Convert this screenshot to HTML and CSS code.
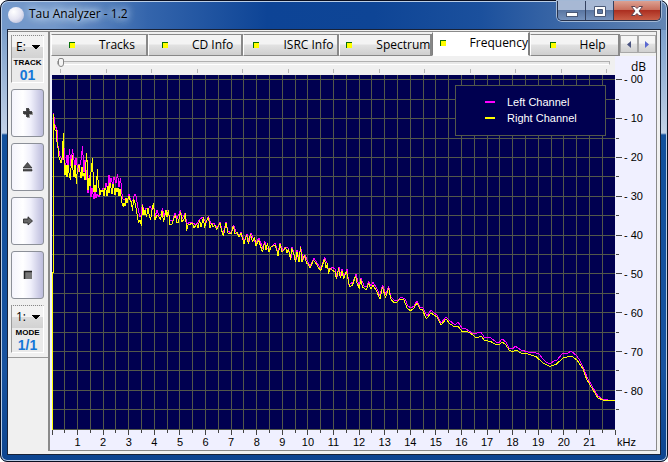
FILE: index.html
```html
<!DOCTYPE html>
<html lang="en">
<head>
<meta charset="utf-8">
<title>Tau Analyzer - 1.2</title>
<link rel="stylesheet" href="styles.css">
</head>
<body>
<div class="window">
  <header class="titlebar">
    <span class="orb"></span>
    <h1 class="title">Tau Analyzer - 1.2</h1>
    <div class="controls">
      <button class="ctl" aria-label="Minimize"><svg width="12" height="12"><rect x=".5" y="7.5" width="11" height="4" fill="#fff" stroke="#4b5a78"/></svg></button>
      <button class="ctl" aria-label="Maximize"><svg width="12" height="12"><path fill="#fff" stroke="#4b5a78" fill-rule="evenodd" d="M.5 1.500h11v10h-11zM3.500 4.500h5v4h-5z"/></svg></button>
      <button class="ctl close" aria-label="Close"><svg width="14" height="12"><path fill="#fff" stroke="#5d4350" d="M1.500 1.500h3.500l2 2 2-2h3.500L9 6l3.500 4.500H9l-2-2-2 2H1.500L5 6z"/></svg></button>
    </div>
  </header>
  <main class="client">
    <aside class="sidebar">
      <div class="tools">
        <div class="frame">
          <select class="combo" aria-label="Drive"><option>E:</option></select>
          <span class="caption">TRACK</span>
          <span class="value">01</span>
        </div>
        <button class="tool" aria-label="Add"><svg width="10" height="10"><path fill="#999" d="M4 1h3v3h3v3H7v3H4V7H1V4h3z"/><path fill="#222" d="M3 0h3v3h3v3H6v3H3V6H0V3h3z" opacity=".8"/></svg></button>
        <button class="tool" aria-label="Eject"><svg width="10" height="10"><path fill="#555" stroke="#222" stroke-width=".6" d="M4.500.5L9 6H0zM0 7.500h9v1.500H0z"/></svg></button>
        <button class="tool" aria-label="Next"><svg width="10" height="10"><path fill="#666" stroke="#222" stroke-width=".8" d="M.5 3H5V.800L9.500 5 5 9V7H.5z"/></svg></button>
        <button class="tool" aria-label="Stop"><svg width="10" height="10"><rect x="1" y="1" width="8" height="8" fill="#777"/><path stroke="#222" stroke-width="1.500" fill="none" d="M1.500 9V1.500H9"/></svg></button>
        <div class="frame">
          <select class="combo" aria-label="Mode"><option>1:</option></select>
          <span class="caption">MODE</span>
          <span class="value">1/1</span>
        </div>
      </div>
    </aside>
    <section class="panel">
      <nav class="tabs">
        <div class="tablist" role="tablist">
          <button class="tab" role="tab"><i class="led"></i>Tracks</button>
          <button class="tab" role="tab"><i class="led"></i>CD Info</button>
          <button class="tab" role="tab"><i class="led"></i>ISRC Info</button>
          <button class="tab" role="tab"><i class="led"></i>Spectrum</button>
          <button class="tab active" role="tab" aria-selected="true"><i class="led"></i>Frequency</button>
          <button class="tab" role="tab"><i class="led"></i>Help</button>
        </div>
        <button class="arrow" aria-label="Scroll left"><svg width="4" height="7"><path fill="#4a5480" d="M4 0v7L0 3.500z"/></svg></button>
        <button class="arrow" aria-label="Scroll right"><svg width="4" height="7"><path fill="#5a68d0" d="M0 0v7l4-3.500z"/></svg></button>
      </nav>
      <div class="page">
        <div class="sliderbar">
          <input class="slider" type="range" min="0" max="12" value="0" aria-label="Position">
          <svg class="marks" viewBox="52 0 563 4" preserveAspectRatio="none" shape-rendering="crispEdges"><path stroke="#b4b4b4" d="M60.500 0v4M106.500 0v4M151.500 0v4M197.500 0v4M242.500 0v4M288.500 0v4M333.500 0v4M379.500 0v4M424.500 0v4M470.500 0v4M515.500 0v4M561.500 0v4M606.500 0v4"/></svg>
        </div>
        <div class="unit-y">dB</div>
        <div class="plot">
          <svg class="graph" viewBox="52 75 563 355" preserveAspectRatio="none" role="img" aria-label="Frequency response">
            <rect x="52" y="75" width="563" height="355" fill="#000050"/>
            <g fill="none" shape-rendering="crispEdges">
              <path stroke="#53584a" d="M64.500 75v355M77.500 75v355M90.500 75v355M103.500 75v355M115.500 75v355M128.500 75v355M141.500 75v355M154.500 75v355M167.500 75v355M179.500 75v355M192.500 75v355M205.500 75v355M218.500 75v355M231.500 75v355M243.500 75v355M256.500 75v355M269.500 75v355M282.500 75v355M295.500 75v355M307.500 75v355M320.500 75v355M333.500 75v355M346.500 75v355M359.500 75v355M371.500 75v355M384.500 75v355M397.500 75v355M410.500 75v355M423.500 75v355M435.500 75v355M448.500 75v355M461.500 75v355M474.500 75v355M487.500 75v355M499.500 75v355M512.500 75v355M525.500 75v355M538.500 75v355M551.500 75v355M563.500 75v355M576.500 75v355M589.500 75v355M602.500 75v355
              M52 79.500h563M52 99.500h563M52 118.500h563M52 138.500h563M52 157.500h563M52 176.500h563M52 196.500h563M52 215.500h563M52 235.500h563M52 254.500h563M52 273.500h563M52 293.500h563M52 312.500h563M52 332.500h563M52 351.500h563M52 370.500h563M52 390.500h563M52 409.500h563M52 429.500h563"/>
              <path stroke="#444" d="M616 79.500h6M616 118.500h6M616 157.500h6M616 196.500h6M616 235.500h6M616 273.500h6M616 312.500h6M616 351.500h6M616 390.500h6M616 99.500h3M616 138.500h3M616 176.500h3M616 215.500h3M616 254.500h3M616 293.500h3M616 332.500h3M616 370.500h3M616 409.500h3
              M52.500 430v5M77.500 430v5M103.500 430v5M128.500 430v5M154.500 430v5M179.500 430v5M205.500 430v5M231.500 430v5M256.500 430v5M282.500 430v5M307.500 430v5M333.500 430v5M359.500 430v5M384.500 430v5M410.500 430v5M435.500 430v5M461.500 430v5M487.500 430v5M512.500 430v5M538.500 430v5M563.500 430v5M589.500 430v5M615.500 430v5
              M64.500 430v3M90.500 430v3M115.500 430v3M141.500 430v3M167.500 430v3M192.500 430v3M218.500 430v3M243.500 430v3M269.500 430v3M295.500 430v3M320.500 430v3M346.500 430v3M371.500 430v3M397.500 430v3M423.500 430v3M448.500 430v3M474.500 430v3M499.500 430v3M525.500 430v3M551.500 430v3M576.500 430v3M602.500 430v3"/>
            </g>
            <path class="trace left" d="M53.500 140V113L55 125 57 130 58 146 60 156 62 160 63.500 135 65 172 67 155 68 168 69.500 149 71 166 72.500 149 74 160 75 168 76 158 78 172 79 164 80.500 165 82.500 146 84 172 85 160 87 180 88 193 90 175 91 197 92 188 94 199 95 192 96 198 97 194 99 197 101 192 103 188 105 189 106 183 108 190 109 175 110 184 111 178 113 186 114 177 116 183 117.500 174 119 187 120.500 178 122 194 123 199 125 199 127 202 129 194 131 202 133 200 134.500 194 136 196 138 208 140 217 141 215 142.500 204 144 212 146 208 148 210 150 206 152 210 153.500 203 155 217 157 210 159 216 161 214 162.500 208 164 217 166 210 168 210 170 221 173 220 175 213 177 219 180.500 210 182 219 185 213 187 224 190 222 193 223 196 225 200 219 203 217 206 223 208.500 216 211 224 214 223 217 228 220 222 223 235 226 222 228 231 231 233 233.500 225 236 232 239 236 241 232 244 241 247 234 249 242 251 233 254 240 256 243 259 238 263 249 264.500 241 267 248 269 250 272 246 275 243 278 253 280 243 283 251 285 247 288 248 291 258 292 247 296 260 297 250 299 260 300.500 246 303 260 305 255 308 262 310 266 314 258 317 263 321 269 324.500 257 327 263 329 272 332 267 335 269 337 277 339 267 341 276 342 269 344 277 347 269 349 285 353 282 356 274 359 286 361 278 364 286 367 287 368.500 281 371 286 373 282 377 289 380 296 382.500 285 386 295 388.500 286 391 297 394 300 398 300 401 297 405 299 408 306 411 308 414 306 417 301 420 307 423 308 427 316 431 310 434 313 437 315 441 323 446 317 449 320 455 325 458 322 462 328 466 329 472 333 477 333 481 332 484 337 491 338 496 342 499 343 502 339 506 342 509 348 513 349 515 346 521 350 528 352 536 353 539 354 543 359 546 362 550 364 554 361 557 360 563 353 567 354 571 351 577 356 580 361 583 367 587 377 593 388 598 396 602 399 608 400 615 400.500"/>
            <path class="trace right" d="M52.500 430V272L53.500 272V114L54 124 55 130 56.500 131 57 142 58 148 59 157 60 160 61 163 62 158 63.500 133 64 160 65 175 66 165 67 177 68 165 69 173 70.500 180 71 168 72.500 155 73 170 74 177 75 165 76.500 184 77 174 78 168 79 165 80 172 81 178 82 167 83 176 84 173 85 180 86.500 153 87 160 88 190 89 178 90 186 91 172 92.500 158 93 172 94 192 95 185 96 192 97.500 169 98 180 99 188 100 195 101 190 102 192 103 190 104 196 105 188 106 190 107 196 108 186 109 193 110 183 111 188 112 194 113 184 114 188 115 195 116 188 117 192 118 188 119 196 120 189 121 196 122 203 123.500 207 124 203 125 206 126 198 127 203 128 199 129 196 130 200 131.500 202 132.500 211 133.500 199 135 203 136 208 137 214 138.500 223 140 220 141.500 226 142.500 205 144 215 145 210 146.500 217 148 208 149 214 150.500 220 152 210 153.500 203 155 220 157 215 159 217 160.500 220 162 211 163.500 222 166 210 167 217 168.500 210 170 225 172 224 174 218 175.500 215 177 223 178.500 222 180.500 212 182 222 184 219 185.500 213 186.500 231 188 225 190.500 224 192.500 223 194 228 196.500 224 198 228 199.500 220 201 227 203.500 217 204.500 228 206 222 208.500 217 210 228 211.500 223 213 227 215 225 216.500 230 220 223 221.500 230 223.500 236 226 223 228 233 231 234 233.500 226 235 234 237 232 239 237 241 233 244 244 246.500 235 248.500 244 250.500 234 252.500 242 254.500 237 256 246 258.500 240 260.500 246 262.500 252 264.500 243 266 250 267.500 243 269 252 271 247 275 245 276.500 249 278 256 280 244 282 252 284 250 285.500 247 287 253 288.500 249 290.500 260 291.500 248 293.500 253 295.500 262 297 252 299 262 300.500 247 302 262 304.500 255 306.500 263 308 264 310 268 313.500 260 317 265 320.500 271 324.500 259 326 268 327.500 263 328.500 274 330 268 332 270 335 272 336.500 279 338.500 268 340.500 278 342 271 343.500 279 346.500 271 349.500 287 352.500 285 355.500 276 357 283 359.500 289 360.500 279 362.500 287 366.500 290 368.500 283 371 289 373 285 376.500 291 380 299 382.500 287 385.500 298 388.500 288 391 299 394 303 397 302 400.500 299 404 300 407 308 410.500 311 414 308 417 303 420 309 422.500 310 426.500 319 431 313 437 317 441 325 446 319 450 324 455 327 458 326 461.500 331 466 331 471.500 334 476.500 338 481.500 336 484 340 491.500 342 496.500 345 500 344 502.500 342 506 345 509 350 512.500 351.500 516 350 521 353 528 354 536.500 357 543 363 550 366.500 556.500 364 563 358 571.500 356 577 360 583 369 586.500 379 593 390 598 398 603 400 615 401"/>
          </svg>
          <div class="legend">
            <div class="key"><i class="swatch left"></i>Left Channel</div>
            <div class="key"><i class="swatch right"></i>Right Channel</div>
          </div>
        </div>
        <div class="axis-y">
          <span>- 00</span><span>- 10</span><span>- 20</span><span>- 30</span><span>- 40</span><span>- 50</span><span>- 60</span><span>- 70</span><span>- 80</span>
        </div>
        <div class="axis-x">
          <span>1</span><span>2</span><span>3</span><span>4</span><span>5</span><span>6</span><span>7</span><span>8</span><span>9</span><span>10</span><span>11</span><span>12</span><span>13</span><span>14</span><span>15</span><span>16</span><span>17</span><span>18</span><span>19</span><span>20</span><span>21</span>
        </div>
        <div class="unit-x">kHz</div>
      </div>
    </section>
  </main>
</div>
</body>
</html>
```
FILE: styles.css
```css
* { box-sizing: border-box; }

body {
  margin: 0;
  background: #fff;
  font: 12px/14px "Open Sans", sans-serif;
  color: #000;
}

button, select { font: inherit; color: inherit; padding: 0; margin: 0; }

.window {
  display: flex;
  flex-direction: column;
  min-height: 100vh;
  padding: 0 6px 6px;
  border: 1px solid #0a0f20;
  border-radius: 8px 8px 7px 7px;
  background:
    linear-gradient(90deg, #7398ca 0, #7398ca 8%, #3465ac 22%, #0d4496 40%, #0e4596 56%, #1b509d 72%, #4a72ab 90%, #6486b4 100%) top / 100% 29px no-repeat,
    linear-gradient(#7c9fcb 29px, #c3d2e7 132px, #12509c 134px, #1853a0 80%, #0d4590);
  box-shadow: inset 0 0 0 1px #b9cde6;
}

/* Title bar */
.titlebar { display: flex; align-items: flex-start; height: 28px; }
.orb {
  width: 16px; height: 16px; margin: 6px 5px 0 1px;
  border-radius: 50%;
  background: radial-gradient(circle at 35% 30%, #fff, #e4e4f2 50%, #aab2d2);
}
.title {
  margin: 6px 0 0; padding: 0 8px 0 0;
  font-size: 12px; font-weight: 400; line-height: 14px;
  text-shadow: 0 0 6px #cfe0f4, 0 0 8px #cfe0f4, 0 0 10px #cfe0f4;
}
.controls {
  display: flex; margin-left: auto;
  height: 20px;
  border: 1px solid #26324e; border-top: 0;
  border-radius: 0 0 5px 5px;
  box-shadow: 0 0 0 1px #a3b8d5;
  overflow: hidden;
}
.ctl {
  display: flex; align-items: center; justify-content: center;
  width: 28px; border: 0; border-right: 1px solid #34415f;
  background: linear-gradient(#a7b8d4 45%, #5a76a2 50%, #7793bd);
}
.ctl.close {
  width: 46px; border-right: 0;
  background: linear-gradient(#dca192 0, #c9705e 45%, #ac2f21 50%, #c95f48);
}

/* Client area */
.client {
  flex: 1; display: flex;
  border: 1px solid #182238;
  background: #f0f0f0;
}
.sidebar { width: 40px; padding: 1px 0; }
.tools {
  display: flex; flex-direction: column; gap: 6px;
  padding: 3px 3px 4px;
  border-top: 1px solid #8c8c8c;
  border-bottom: 1px solid #9a9a9a;
}
.frame {
  display: flex; flex-direction: column; align-items: center;
  height: 48px; width: 33px;
  border-left: 1px solid #9a9a9a;
  border-right: 1px solid #fff;
  border-top: 1px dotted #888;
  border-bottom: 1px solid #fff;
  background: #eaeaea;
}
.combo {
  appearance: none; width: 100%; height: 22px;
  padding: 0 0 0 4px;
  border: 0; border-radius: 0;
  background:
    linear-gradient(to bottom right, #000 50%, transparent 51%) 24px 9px / 4px 4px no-repeat,
    linear-gradient(to bottom left, #000 50%, transparent 51%) 20px 9px / 4px 4px no-repeat,
    linear-gradient(#f3f3f3 50%, #dcdcdc 50%, #d2d2d2);
}
.caption { font: 700 8px/10px "Liberation Sans", sans-serif; }
.value { font: 700 14px/14px "Liberation Sans", sans-serif; color: #1477d8; }
.tool {
  display: flex; align-items: center; justify-content: center;
  height: 48px; width: 33px;
  border: 1px solid #8c9098; border-radius: 3px;
  background: linear-gradient(90deg, #f4f4fc, #fff 35%, #f0f0fb 60%, #bcbcdc);
}

/* Tabs */
.panel {
  flex: 1; min-width: 0;
  display: flex; flex-direction: column;
  margin: 1px 3px 3px 0;
  border: 1px solid #8a8a8a; border-left: 2px solid #8a8a8a;
}
.tabs { display: flex; align-items: flex-end; height: 24px; padding-left: 1px; }
.tablist {
  flex: 1; align-self: stretch;
  display: grid; align-items: end;
  grid-template-columns: 97fr 95fr 97fr 93fr 98fr 90fr;
}
.tab {
  display: flex; align-items: center; justify-content: center; gap: 24px;
  height: 22px; padding-left: 6px;
  border: 1px solid #888; border-left-color: #fff; border-right-width: 2px;
  background: linear-gradient(#f4f4f4 45%, #e2e2e2 50%, #cfcfcf);
  white-space: nowrap;
}
.tab.active {
  height: 24px; padding-bottom: 3px;
  border-color: #fff #808080 #fff #808080;
  background: #fff;
}
.led {
  width: 6px; height: 6px;
  border-top: 1px solid #087008; border-left: 1px solid #087008;
  background: #ff0;
}
.arrow {
  display: flex; align-items: center; justify-content: center;
  width: 18px; height: 18px; margin-bottom: 3px;
  border: 1px solid #a8a8a8;
  background: linear-gradient(#f5f5f5 45%, #e2e2e2 50%, #d0d0d0);
}

/* Chart page */
.page {
  flex: 1;
  display: grid;
  grid-template: 19px 1fr 20px / 1fr 41px;
  padding-left: 2px;
  background: #f0f0ff;
  font: 11px/14px "Liberation Sans", sans-serif;
}
.sliderbar { display: flex; flex-direction: column; margin-left: -2px; padding-left: 2px; background: #f0f0f0; }
.slider {
  appearance: none; display: block;
  width: calc(100% - 10px); height: 13px; margin: 0 5px;
  background: none;
}
.slider::-webkit-slider-runnable-track {
  height: 4px;
  border: 1px solid #b0b0b0; border-bottom-color: #fff;
  background: #e8e8e8;
}
.slider::-webkit-slider-thumb {
  appearance: none;
  width: 6px; height: 9px; margin-top: -4px;
  border: 1px solid #858585; border-radius: 2px 2px 3px 3px;
  background: #f4f4f4;
}
.marks { width: 100%; height: 4px; }
.unit-y { padding: 4px 0 0 16px; font-family: "Open Sans", sans-serif; font-size: 12px; }
.plot { position: relative; min-height: 0; height: 100%; }
.graph {
  position: absolute; inset: 0;
  width: 100%; height: 100%;
  overflow: visible;
}
.trace { fill: none; stroke-width: 1; stroke-linejoin: bevel; shape-rendering: crispEdges; }
.trace.left { stroke: #f0f; }
.trace.right { stroke: #ff0; }
.legend {
  position: absolute; top: 10px; right: 9px;
  display: flex; flex-direction: column; gap: 2px;
  width: 151px; height: 51px; padding: 9px 0 0 29px;
  border: 1px solid #53584a;
  background: #000050; color: #fff;
}
.key { display: flex; align-items: center; gap: 12px; }
.swatch { width: 10px; height: 2px; }
.swatch.left { background: #f0f; }
.swatch.right { background: #ff0; }
.axis-y {
  display: flex; flex-direction: column;
  margin-top: -15px; padding: 0 0 20px 9px;
}
.axis-y span { flex: 1; display: flex; align-items: center; }
.axis-x {
  display: grid; grid-template-columns: 1fr repeat(21, 2fr) 1fr;
  padding-top: 5px; text-align: center;
}
.axis-x span:first-child { grid-column: 2; }
.unit-x { padding: 5px 0 0 2px; }
```
